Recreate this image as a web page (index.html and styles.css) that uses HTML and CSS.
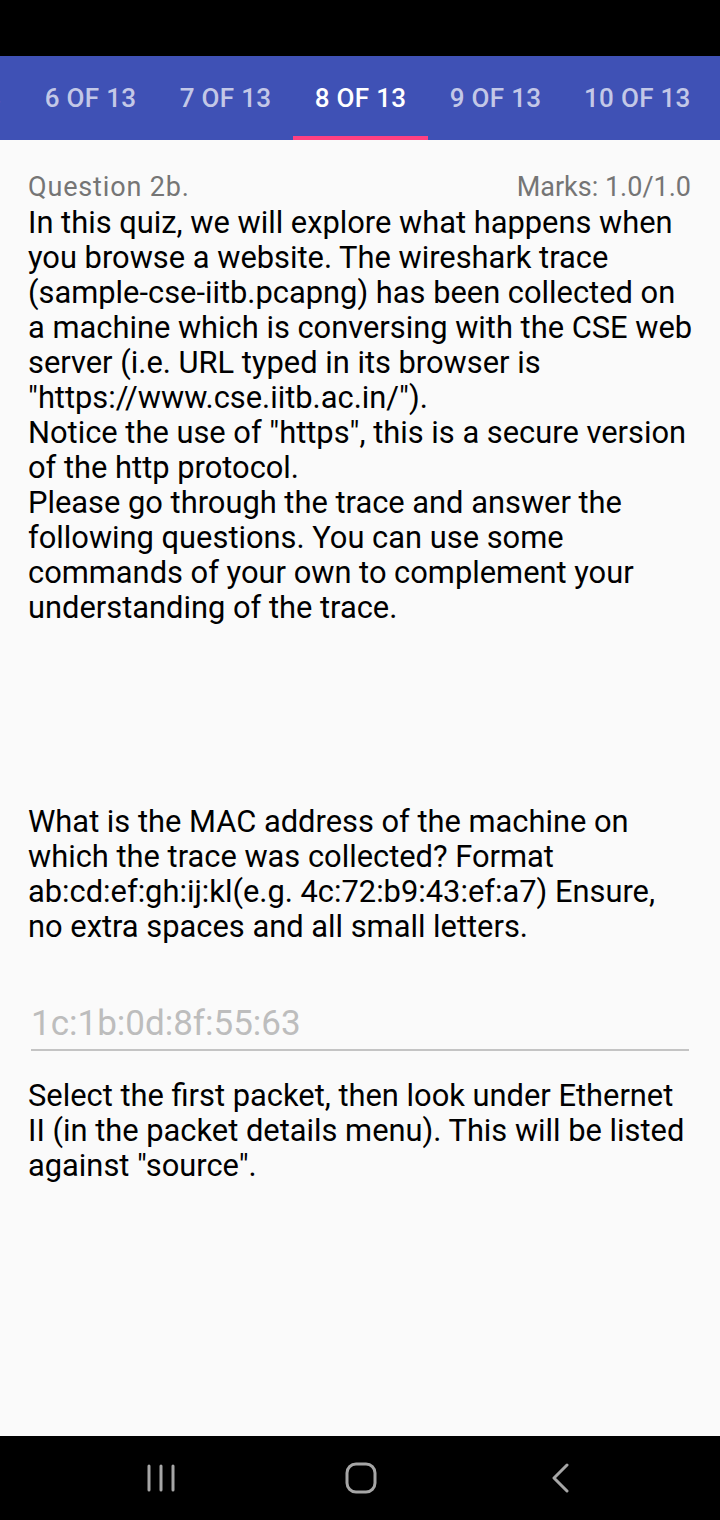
FILE: index.html
```html
<!DOCTYPE html>
<html>
<head>
<meta charset="utf-8">
<link rel="stylesheet" href="styles.css">
</head>
<body>
<div class="screen">
  <div class="status-bar"></div>
  <div class="tab-bar">
    <div class="tabs">
      <div class="tab">5 OF 13</div>
      <div class="tab">6 OF 13</div>
      <div class="tab">7 OF 13</div>
      <div class="tab active">8 OF 13</div>
      <div class="tab">9 OF 13</div>
      <div class="tab">10 OF 13</div>
    </div>
  </div>
  <main class="content">
    <div class="q-header">
      <span class="q-title">Question 2b.</span>
      <span class="q-marks">Marks: 1.0/1.0</span>
    </div>
    <p class="text intro">In this quiz, we will explore what happens when you browse a website. The wireshark trace (sample-cse-iitb.pcapng) has been collected on a machine which is conversing with the CSE web server (i.e. URL typed in its browser is "https://www.cse.iitb.ac.in/").<br>Notice the use of "https", this is a secure version of the http protocol.<br>Please go through the trace and answer the following questions. You can use some commands of your own to complement your understanding of the trace.</p>
    <p class="text question">What is the MAC address of the machine on which the trace was collected? Format ab:cd:ef:gh:ij:kl(e.g. 4c:72:b9:43:ef:a7) Ensure, no extra spaces and all small letters.</p>
    <div class="answer">
      <span class="answer-text">1c:1b:0d:8f:55:63</span>
    </div>
    <p class="text hint">Select the first packet, then look under Ethernet II (in the packet details menu). This will be listed against "source".</p>
  </main>
  <nav class="nav-bar">
    <div class="nav-slot">
      <svg width="30" height="30" viewBox="0 0 30 30">
        <g stroke="#a6a6a6" stroke-width="3" stroke-linecap="round" fill="none">
          <line x1="3" y1="3" x2="3" y2="27"/>
          <line x1="15" y1="3" x2="15" y2="27"/>
          <line x1="27" y1="3" x2="27" y2="27"/>
        </g>
      </svg>
    </div>
    <div class="nav-slot">
      <svg width="32" height="32" viewBox="0 0 32 32">
        <rect x="2" y="2" width="28" height="28" rx="9" ry="9" stroke="#a6a6a6" stroke-width="3" fill="none"/>
      </svg>
    </div>
    <div class="nav-slot">
      <svg width="22" height="30" viewBox="0 0 22 30">
        <polyline points="17,2 4,15 17,28" stroke="#a6a6a6" stroke-width="3" stroke-linecap="round" stroke-linejoin="round" fill="none"/>
      </svg>
    </div>
  </nav>
</div>
</body>
</html>
```

FILE: styles.css
```css
* { box-sizing: border-box; }
html, body {
  margin: 0;
  padding: 0;
  background: #000;
}
body {
  font-family: Roboto, "Noto Sans", sans-serif;
}
.screen {
  width: 720px;
  height: 1520px;
  display: flex;
  flex-direction: column;
  background: #fafafa;
  overflow: hidden;
}
.status-bar {
  height: 56px;
  background: #000;
  flex: none;
}
.tab-bar {
  height: 84px;
  background: #3f51b5;
  flex: none;
  overflow: hidden;
}
.tabs {
  display: flex;
  height: 100%;
  margin-left: -112px;
}
.tab {
  flex: none;
  height: 100%;
  padding: 4px 21px 0;
  display: flex;
  align-items: center;
  justify-content: center;
  min-width: 135px;
  font-size: 26px;
  font-weight: 500;
  color: rgba(255, 255, 255, 0.7);
  letter-spacing: 0.3px;
  border-bottom: 4px solid transparent;
  white-space: nowrap;
}
.tab.active {
  color: #fff;
  border-bottom-color: #ff4081;
}
.content {
  flex: 1;
  padding: 32px 26px 0 28px;
}
.q-header {
  display: flex;
  justify-content: space-between;
  align-items: baseline;
  font-size: 27px;
  line-height: 30px;
  color: #757575;
  margin: 0 3px 3px 0;
}
.q-title {
  letter-spacing: 0.85px;
}
.text {
  margin: 0;
  font-size: 30.85px;
  line-height: 35px;
  color: #000;
}
.question {
  margin-top: 179px;
}
.answer {
  margin: 60px 5px 0 3px;
  padding-bottom: 5px;
  border-bottom: 2px solid #c4c4c4;
}
.answer-text {
  display: block;
  font-size: 35px;
  line-height: 40px;
  color: #bdbdbd;
}
.hint {
  margin-top: 27px;
}
.nav-bar {
  height: 84px;
  background: #000;
  flex: none;
  display: flex;
  align-items: center;
  padding-left: 61px;
}
.nav-slot {
  width: 200px;
  display: flex;
  justify-content: center;
}
.nav-slot svg {
  display: block;
}
```
